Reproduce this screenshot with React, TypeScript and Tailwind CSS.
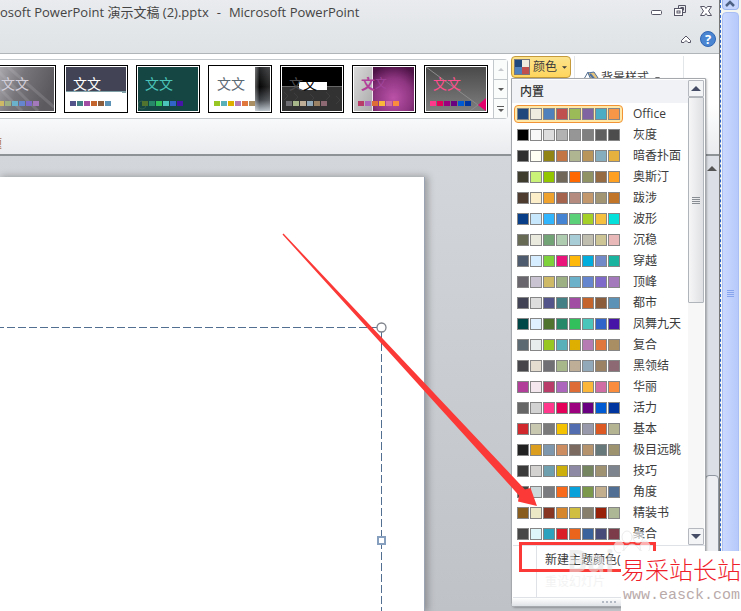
import React from "react";

type Scheme = { name: string; colors: string[] };

const schemes: Scheme[] = [
  { name: "Office", colors: ["#1f497d", "#eeece1", "#4f81bd", "#c0504d", "#9bbb59", "#8064a2", "#4bacc6", "#f79646"] },
  { name: "灰度", colors: ["#000000", "#f8f8f8", "#dddddd", "#b2b2b2", "#969696", "#808080", "#5f5f5f", "#4d4d4d"] },
  { name: "暗香扑面", colors: ["#2f2f2f", "#fffff4", "#918415", "#c47546", "#afb591", "#b9945b", "#85adbd", "#e6b13f"] },
  { name: "奥斯汀", colors: ["#3e3d2d", "#caf278", "#94c600", "#71685a", "#ff6700", "#909465", "#956b43", "#fea022"] },
  { name: "跋涉", colors: ["#4e3b30", "#fbeec9", "#f0a22e", "#a5644e", "#b58b80", "#c3986d", "#a19574", "#c17529"] },
  { name: "波形", colors: ["#073e87", "#c6e7fc", "#31b6fd", "#4584d3", "#5bd078", "#a5d028", "#f5c040", "#05e0db"] },
  { name: "沉稳", colors: ["#676a55", "#eaebde", "#72a376", "#b0ccb0", "#a8cdd7", "#c0beaf", "#cec597", "#e8b7b7"] },
  { name: "穿越", colors: ["#4e5b6f", "#d6ecff", "#7fd13b", "#ea157a", "#feb80a", "#00addc", "#738ac8", "#1ab39f"] },
  { name: "顶峰", colors: ["#69676d", "#c9c2d1", "#ceb966", "#9cb084", "#6bb1c9", "#6585cf", "#7e6bc9", "#a379bb"] },
  { name: "都市", colors: ["#424456", "#dedede", "#53548a", "#438086", "#a04da3", "#c4652d", "#8b5d3d", "#5c92b5"] },
  { name: "凤舞九天", colors: ["#004646", "#e0f0ff", "#50742f", "#268868", "#31c05b", "#4bc5b9", "#3064c8", "#4714a8"] },
  { name: "复合", colors: ["#5b6973", "#e7ecec", "#98c723", "#59b0b9", "#deae00", "#b77bb4", "#e0773c", "#a98d63"] },
  { name: "黑领结", colors: ["#46464a", "#e3dccf", "#6f6f74", "#a7b789", "#beae98", "#92a9b9", "#9c8265", "#8d6974"] },
  { name: "华丽", colors: ["#b13f9a", "#f4e7ed", "#b83d68", "#ac66bb", "#de6c36", "#f9b639", "#cf6da4", "#fa8d3d"] },
  { name: "活力", colors: ["#666666", "#d2d2d2", "#ff388c", "#e40059", "#9c007f", "#68007f", "#005bd3", "#00349e"] },
  { name: "基本", colors: ["#d1282e", "#c8c8b1", "#7a7a7a", "#f5c201", "#526db0", "#989aac", "#dc5924", "#b4b392"] },
  { name: "极目远眺", colors: ["#212121", "#dc9e1f", "#7e97ad", "#cc8e60", "#7a6a60", "#b4936d", "#67787b", "#9d936f"] },
  { name: "技巧", colors: ["#3b3b3b", "#d4d2d0", "#6ea0b0", "#ccaf0a", "#8d89a4", "#748560", "#9e9273", "#7e848d"] },
  { name: "角度", colors: ["#434342", "#cdd7d9", "#797b7e", "#f96a1b", "#08a1d9", "#7c984a", "#c2ad8d", "#506e94"] },
  { name: "精装书", colors: ["#895d1d", "#ece9c6", "#873624", "#d6862d", "#d0be40", "#877f6c", "#972109", "#aeb795"] },
  { name: "聚合", colors: ["#464646", "#def5fa", "#2da2bf", "#da1f28", "#eb641b", "#39639d", "#474b78", "#7d3c4a"] },
];

type Theme = { label: string; text: string; colors: string[]; art: React.ReactNode; second?: string };

const themes: Theme[] = [
  {
    label: "顶峰",
    text: "text-[#d3cfda]",
    colors: ["#ceb966", "#9cb084", "#6bb1c9", "#6585cf", "#7e6bc9", "#a379bb"],
    art: (
      <>
        <defs>
          <linearGradient id="peak" x1="0" y1="0" x2="1" y2="0.3">
            <stop offset="0" stopColor="#b5b3b8" />
            <stop offset="0.5" stopColor="#77757a" />
            <stop offset="1" stopColor="#5d5a5f" />
          </linearGradient>
        </defs>
        <rect width="60" height="44" fill="url(#peak)" />
        <path d="M0 0L44 44M14 0L60 40M0 16L28 44" stroke="#c4c2c8" strokeOpacity="0.2" strokeWidth="3" />
      </>
    ),
  },
  {
    label: "都市",
    text: "text-white",
    colors: ["#53548a", "#438086", "#a04da3", "#c4652d", "#8b5d3d", "#5c92b5"],
    art: (
      <>
        <rect width="60" height="44" fill="#fff" />
        <rect width="60" height="24" fill="#424456" />
        <path d="M0 24.5H60M56 25.5H60" stroke="#7d9fa5" />
      </>
    ),
  },
  {
    label: "凤舞九天",
    text: "text-[#4bc5b9]",
    colors: ["#50742f", "#268868", "#31c05b", "#4bc5b9", "#3064c8", "#4714a8"],
    art: (
      <>
        <rect width="60" height="44" fill="#154644" />
        <circle cx="4" cy="38" r="4" fill="none" stroke="#2e5c50" />
      </>
    ),
  },
  {
    label: "复合",
    text: "text-[#5b6973]",
    colors: ["#98c723", "#59b0b9", "#deae00", "#b77bb4", "#e0773c", "#a98d63"],
    art: (
      <>
        <defs>
          <linearGradient id="comp" x1="0" y1="0" x2="0" y2="1">
            <stop offset="0" stopColor="#2a2b2d" />
            <stop offset="0.45" stopColor="#050505" />
            <stop offset="0.75" stopColor="#3d4146" />
            <stop offset="1" stopColor="#b7c0c8" />
          </linearGradient>
          <linearGradient id="compEdge">
            <stop offset="0" stopColor="#fff" stopOpacity="0.35" />
            <stop offset="0.3" stopColor="#fff" stopOpacity="0" />
            <stop offset="1" stopColor="#fff" stopOpacity="0.15" />
          </linearGradient>
        </defs>
        <rect width="60" height="44" fill="#fff" />
        <rect x="45" width="15" height="44" fill="url(#comp)" />
        <rect x="45" width="15" height="44" fill="url(#compEdge)" />
      </>
    ),
  },
  {
    label: "黑领结",
    text: "text-[#4c4c4e]",
    second: "text-black",
    colors: ["#6f6f74", "#a7b789", "#beae98", "#92a9b9", "#9c8265", "#8d6974"],
    art: (
      <>
        <rect width="60" height="44" fill="#000" />
        <rect y="19" width="60" height="25" fill="#323232" />
        <path d="M0 19.5H60" stroke="#666" />
        <path d="M2 25l4 4-4 4M12 26l4 4-4 4M28 27l4 4-4 4M44 25l4 4-4 4M54 29l4 4-4 4" stroke="#3d3d3d" fill="none" />
        <rect x="17" y="15" width="28" height="8" fill="#fff" />
      </>
    ),
  },
  {
    label: "华丽",
    text: "text-[#b13f9a] font-bold",
    second: "text-[#a0459a] text-xs font-normal",
    colors: ["#b83d68", "#ac66bb", "#de6c36", "#f9b639", "#cf6da4", "#fa8d3d"],
    art: (
      <>
        <defs>
          <radialGradient id="rich" cx="0.5" cy="0.7" r="0.75">
            <stop offset="0" stopColor="#bb52a8" />
            <stop offset="0.6" stopColor="#8d3580" />
            <stop offset="1" stopColor="#4d1346" />
          </radialGradient>
          <linearGradient id="richSide" x1="0" y1="0" x2="1" y2="1">
            <stop offset="0" stopColor="#d9d9d9" />
            <stop offset="1" stopColor="#a9a9a9" />
          </linearGradient>
        </defs>
        <rect width="19" height="44" fill="url(#richSide)" />
        <rect x="19" width="41" height="44" fill="url(#rich)" />
        <path d="M18.5 0V44" stroke="#f3e6f1" />
      </>
    ),
  },
  {
    label: "活力",
    text: "text-[#ff4f8f]",
    colors: ["#ff388c", "#e40059", "#9c007f", "#68007f", "#005bd3", "#00349e"],
    art: (
      <>
        <defs>
          <linearGradient id="verve" x1="0" y1="0" x2="0" y2="1">
            <stop offset="0" stopColor="#4a4a4a" />
            <stop offset="1" stopColor="#7e7e7e" />
          </linearGradient>
        </defs>
        <rect width="60" height="44" fill="url(#verve)" />
        <path d="M0 0L52 38M44 44L52 38" stroke="#8c8c8c" />
        <path d="M60 31V44L52 38Z" fill="#e4006c" />
      </>
    ),
  },
];

function Triangle({ up, className }: { up?: boolean; className: string }) {
  return (
    <svg viewBox="0 0 8 4" className={className} aria-hidden="true">
      <path d={up ? "M0 4L4 0L8 4Z" : "M0 0H8L4 4Z"} fill="currentColor" />
    </svg>
  );
}

function TitleBar() {
  return (
    <header className="flex h-[54px] shrink-0 justify-between border-b border-[#b0b5ba] bg-gradient-to-b from-[#e9ebee] to-[#dfe3e6]">
      <h1 className="flex gap-2 whitespace-nowrap text-[13px] leading-6 text-[#444]">
        <span>osoft PowerPoint 演示文稿 (2).pptx</span>
        <span>-</span>
        <span>Microsoft PowerPoint</span>
      </h1>
      <div className="flex flex-col items-end justify-between pb-1 pt-1">
        <div className="flex gap-3 pr-[7px]">
          <button aria-label="最小化" className="h-4 w-3">
            <svg viewBox="0 0 12 16" fill="none" stroke="#565565">
              <rect x="1.5" y="6.5" width="10" height="4" rx="1" fill="#fff" />
            </svg>
          </button>
          <button aria-label="向下还原" className="h-4 w-3">
            <svg viewBox="0 0 12 16" fill="none" stroke="#565565">
              <path d="M4.500 4V1.500H11.500V8.500H8.500M6.500 3.500H9.500V6.500" />
              <rect x="0.500" y="4.500" width="8" height="7" fill="#fff" />
              <rect x="3" y="7" width="3" height="2" />
            </svg>
          </button>
          <button aria-label="关闭" className="ml-0.5 h-4 w-3">
            <svg viewBox="0 0 12 16" fill="#fff" stroke="#565565">
              <path d="M0.500 2.500H4.500L6 4.500L7.500 2.500H11.500L8.500 7L11.500 11.500H7.500L6 9.500L4.500 11.500H0.500L3.500 7Z" />
            </svg>
          </button>
        </div>
        <div className="flex items-center gap-[9px] pb-0.5 pr-[3px]">
          <button aria-label="功能区最小化" className="h-3 w-2.5">
            <svg viewBox="0 0 10 12" fill="#fff" stroke="#565565">
              <path d="M5 3L9.500 7.500V9.500H7L5 7.500L3 9.500H0.500V7.500Z" />
            </svg>
          </button>
          <button
            aria-label="帮助"
            className="h-4 w-4 rounded-full border border-[#2f66b4] bg-[#4a85d2] text-center text-[13px] font-bold leading-[14px] text-white"
          >
            ?
          </button>
        </div>
      </div>
    </header>
  );
}

function Gallery() {
  return (
    <div className="mt-[5px] flex h-[60px] min-w-0 flex-1 rounded-r border border-l-0 border-[#c3c8cd] bg-white">
      <div className="flex min-w-0 flex-1 gap-2 overflow-hidden pt-[5px]">
        {themes.map((t, i) => (
          <button
            key={t.label}
            aria-label={t.label}
            className={`relative h-12 w-16 shrink-0 border border-black bg-white p-px text-left ${i === 0 ? "-ml-2" : ""}`}
          >
            <svg viewBox="0 0 60 44" className="absolute left-px top-px h-11 w-[60px]" aria-hidden="true">
              {t.art}
            </svg>
            <span className={`relative mt-2 flex h-4 pl-[7px] text-sm leading-4 ${t.text}`}>
              <span>文</span>
              <span className={t.second ?? ""}>文</span>
            </span>
            <span className="relative mb-1 mt-[9px] flex gap-px pl-1">
              {t.colors.map((c) => (
                <span key={c} className="h-[5px] w-1.5" style={{ backgroundColor: c }} />
              ))}
            </span>
          </button>
        ))}
      </div>
      <div className="flex w-3.5 flex-col divide-y divide-[#c3c8cd] border-l border-[#c3c8cd] bg-[#fafbfb] text-[#5c5c5c]">
        <button aria-label="上一行" className="flex flex-1 items-center justify-center text-[#c5c8cc]">
          <Triangle up className="h-[3px] w-1.5" />
        </button>
        <button aria-label="下一行" className="flex flex-1 items-center justify-center">
          <Triangle className="h-[3px] w-1.5" />
        </button>
        <button aria-label="其他" className="flex flex-1 flex-col items-center justify-center gap-0.5">
          <span className="h-px w-[7px] bg-current" />
          <Triangle className="h-[3px] w-1.5" />
        </button>
      </div>
    </div>
  );
}

function ColorMenu() {
  return (
    <div
      role="menu"
      className="absolute left-0 top-[22px] z-10 w-[195px] rounded-b-sm border border-[#a5a9ae] bg-white pt-px shadow-[1px_1px_2px_#00000040]"
    >
      <div className="flex h-[465px] pr-px">
        <div className="min-w-0 flex-1 overflow-hidden">
          <h2 className="h-[23px] bg-[#f0f2f5] pl-2 text-xs font-medium leading-6 text-[#333]">内置</h2>
          <ul>
            {schemes.map((s, i) => (
              <li key={s.name}>
                <button role="menuitem" className="flex h-[21px] w-full items-center gap-2.5 pl-0.5 text-xs text-[#3b3b3b]">
                  <span
                    className={`flex gap-px rounded-sm border p-0.5 ${
                      i === 0 ? "border-[#f29436] bg-[#ffe8a8]" : "border-transparent"
                    }`}
                  >
                    {s.colors.map((c) => (
                      <span key={c} className="h-3 w-3 border border-[#868686]" style={{ backgroundColor: c }} />
                    ))}
                  </span>
                  <span className="whitespace-nowrap">{s.name}</span>
                </button>
              </li>
            ))}
          </ul>
        </div>
        <div className="flex w-4 flex-col bg-[#f7f7f8] text-[#454c66]">
          <button aria-label="向上滚动" className="flex h-[17px] items-center justify-center rounded-[1px] border border-[#b5b9bf] bg-[#f3f4f5]">
            <Triangle up className="h-[5px] w-2.5" />
          </button>
          <div className="flex h-[206px] flex-col items-center justify-center gap-px rounded-[1px] border border-[#b0b4bb] bg-gradient-to-r from-[#f6f6f7] to-[#dfe0e3]">
            {[0, 1, 2, 3].map((n) => (
              <span key={n} className="h-px w-2 bg-[#888d94]" />
            ))}
          </div>
          <button
            aria-label="向下滚动"
            className="mt-auto flex h-[17px] items-center justify-center rounded-[1px] border border-[#b5b9bf] bg-[#f3f4f5]"
          >
            <Triangle className="h-[5px] w-2.5" />
          </button>
        </div>
      </div>
      <div className="ml-px flex h-[53px] border-y border-[#dfe3e8]">
        <div className="w-6 shrink-0 border-r border-[#dfe3e8]" />
        <div className="flex min-w-0 flex-1 flex-col pl-2 pt-1 text-xs">
          <button role="menuitem" className="h-5 whitespace-nowrap text-left text-[#3b3b3b]">
            新建主题颜色(
          </button>
          <button role="menuitem" className="h-6 whitespace-nowrap text-left text-[#f3f3f3]">
            重设幻灯片
          </button>
        </div>
      </div>
      <div className="flex h-2 items-center justify-center gap-0.5 bg-gradient-to-b from-white to-[#dfe2e6]">
        {[0, 1, 2, 3].map((n) => (
          <span key={n} className="h-0.5 w-0.5 bg-[#b3bac4]" />
        ))}
      </div>
    </div>
  );
}

function Ribbon() {
  return (
    <div className="flex h-[102px] shrink-0 flex-col border-b-2 border-[#8d9297] bg-gradient-to-b from-white via-white to-[#e9ebee]">
      <div className="flex min-h-0 flex-1">
        <Gallery />
        <div className="relative ml-[3px] mt-0.5 flex w-[208px] shrink-0 items-start">
          <button className="flex h-[22px] w-[60px] shrink-0 items-center gap-[3px] rounded-sm border border-[#c49a3b] bg-gradient-to-b from-[#fce38c] to-[#ffd65c] pl-0.5 text-xs text-[#3b3b3b]">
            <span className="grid h-4 w-4 shrink-0 grid-cols-2 border border-[#77777d]">
              <span className="bg-[#1f497d]" />
              <span className="bg-[#eeece1]" />
              <span className="bg-[#4f81bd]" />
              <span className="bg-[#c0504d]" />
            </span>
            <span className="whitespace-nowrap">颜色</span>
            <Triangle className="ml-0.5 h-[3px] w-[5px]" />
          </button>
          <div className="ml-[3px] flex h-20 w-[110px] border-x border-[#e3e6e9] pl-2 pt-3">
            <button className="flex h-5 items-center gap-0.5 whitespace-nowrap text-xs text-[#3b3b3b]">
              <svg viewBox="0 0 16 16" className="h-4 w-4" aria-hidden="true">
                <path d="M1 9L5 2L8 8" fill="none" stroke="#56708f" />
                <path d="M5 3L11 2L15 8L9 12Z" fill="#e2c27d" stroke="#4b6fa0" />
                <path d="M7 4L12 10" stroke="#4b6fa0" strokeWidth="2" />
              </svg>
              背景样式
              <Triangle className="ml-1 h-[3px] w-[5px]" />
            </button>
          </div>
          <ColorMenu />
        </div>
      </div>
      <div className="flex h-4 w-0.5 shrink-0 justify-end overflow-hidden">
        <span className="shrink-0 text-xs leading-3 text-[#b0703c]">题</span>
      </div>
    </div>
  );
}

function Workspace() {
  return (
    <main className="flex min-h-0 flex-1">
      <div className="min-w-0 flex-1 overflow-hidden bg-gradient-to-b from-[#d3d6da] to-[#bfc2c7] pt-[21px]">
        <div className="h-full w-[425px] border-r border-[#9aa3b1] bg-white shadow-[2px_0_7px_1px_#00000044]">
          <svg viewBox="0 0 424 434" className="h-[434px] w-[424px]" fill="none" stroke="#526f91" aria-hidden="true">
            <path d="M-4 150.500H377" strokeDasharray="8 3" />
            <path d="M381.500 155V434" strokeDasharray="8 3" />
            <circle cx="381.500" cy="150.500" r="4.500" fill="#fff" stroke="#7e828a" strokeWidth="1.300" />
            <rect x="378" y="360" width="7" height="7" fill="#fff" stroke="#869fbe" strokeWidth="2" />
          </svg>
        </div>
      </div>
      <div className="flex w-3.5 flex-col bg-[#dcdfe5]">
        <button aria-label="向上滚动幻灯片" className="flex h-6 items-center justify-center text-[#555]">
          <Triangle up className="h-[5px] w-2.5" />
        </button>
        <div className="mt-[295px] flex-1 rounded-t-sm border border-[#8f969f] bg-[#eceef1]" />
      </div>
    </main>
  );
}

function OuterScrollbar() {
  return (
    <aside className="flex w-[21px] shrink-0 flex-col items-center bg-[#f6f6f0] pr-px">
      <button aria-label="页面向上滚动" className="flex h-2.5 w-[17px] items-start justify-center rounded-b-sm border border-t-0 border-[#9db6ee] bg-[#c6d5fd]">
        <svg viewBox="0 0 10 7" className="h-[7px] w-2.5" fill="none" stroke="#4d6185" strokeWidth="2.500" aria-hidden="true">
          <path d="M1 6L5 2L9 6" />
        </svg>
      </button>
      <div className="mt-0.5 flex w-[17px] flex-1 flex-col items-center justify-center gap-px rounded-t-sm border border-[#aac0f5] bg-gradient-to-r from-[#cbd9fe] to-[#b6c9fa]">
        {[0, 1, 2, 3].map((n) => (
          <span key={n} className="h-px w-[7px] bg-[#86a5ec]" />
        ))}
        <span className="h-9" />
      </div>
    </aside>
  );
}

export default function App() {
  return (
    <div className="relative flex h-screen overflow-hidden bg-white font-['Open_Sans','Noto_Sans_CJK_SC',sans-serif]">
      <div className="flex min-w-0 flex-1 flex-col">
        <TitleBar />
        <Ribbon />
        <Workspace />
      </div>
      <div className="w-px shrink-0 bg-[#777]" />
      <OuterScrollbar />
      <div className="absolute inset-y-0 right-5 z-10 border-l border-dashed border-[#2e62c4]" />

      <svg viewBox="0 0 741 611" className="pointer-events-none absolute left-0 top-0 z-20 h-[611px] w-[741px]" aria-hidden="true">
        <path d="M282.500 234.500L519 495.500L518 501.500L537 506L530.500 488L525 489.500L283.500 233.500Z" fill="#fb3a37" />
        <rect x="520.500" y="543.500" width="134" height="27" fill="none" stroke="#fb3a37" strokeWidth="3" />
        <g fill="#fff" fillOpacity="0.6" stroke="#ddd" strokeOpacity="0.6">
          <ellipse cx="619" cy="547" rx="5" ry="6" />
          <ellipse cx="627" cy="537" rx="5" ry="6" />
          <ellipse cx="638" cy="537" rx="5" ry="6" />
          <ellipse cx="645" cy="547" rx="5" ry="6" />
          <path d="M632 544C625 544 618 560 624 562H640C646 560 639 544 632 544Z" />
        </g>
      </svg>
      <span className="pointer-events-none absolute bottom-8 left-[567px] z-20 text-3xl font-bold leading-9 text-[#e4e4e4]/60">
        Bai
      </span>
      <div className="absolute bottom-0 right-0 z-30 h-[60px] w-[120px] overflow-hidden bg-white font-['Noto_Sans_CJK_SC',sans-serif]">
        <p className="whitespace-nowrap pt-0.5 text-2xl font-light leading-8 text-[#f0202a]">易采站长站</p>
        <p className="whitespace-nowrap pl-0.5 font-['Liberation_Mono',monospace] text-[15px] leading-[22px] text-[#b9aaaa]">
          www.easck.com
        </p>
      </div>
    </div>
  );
}
